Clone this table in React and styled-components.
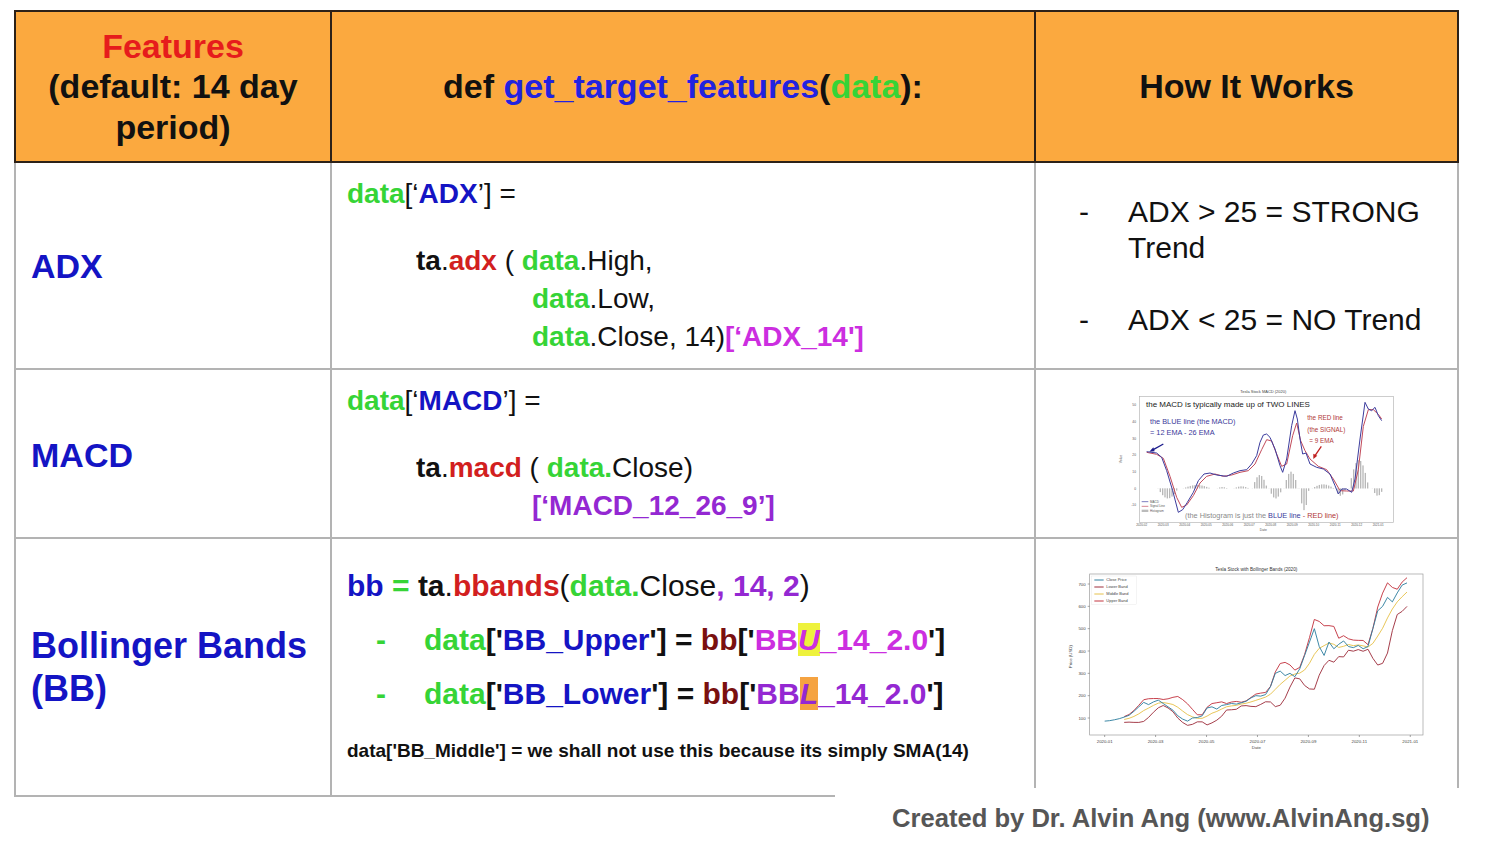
import React from "react";
import styled, { createGlobalStyle } from "styled-components";

const GREEN = "#36d436";
const BLUE = "#1414c4";
const RED = "#d21f1f";
const MAROON = "#7a1010";
const MAGENTA = "#cc2ee0";
const VIOLET = "#9428d2";
const HEAD_LINE = "#2c2118";
const GRID_LINE = "#b3b3b3";

const GlobalStyle = createGlobalStyle`
  body {
    margin: 0;
    background: #fff;
    color: #111;
    font-family: "Liberation Sans", Arial, sans-serif;
  }
`;

const Page = styled.div`
  padding: 10px 0 0 14px;
  width: 1445px;
`;

const Row = styled.div`
  display: grid;
  grid-template-columns: 316px 704px 425px;
  height: ${({ $h }) => $h}px;
  box-sizing: border-box;
  border-bottom: 2px solid ${({ $head }) => ($head ? HEAD_LINE : GRID_LINE)};
  ${({ $head }) => $head && `border-top: 2px solid ${HEAD_LINE}; background: #fba93f;`}
`;

const Cell = styled.div`
  box-sizing: border-box;
  min-width: 0;
  border-left: 2px solid ${({ $head }) => ($head ? HEAD_LINE : GRID_LINE)};
  ${({ $last, $head }) => $last && `border-right: 2px solid ${$head ? HEAD_LINE : GRID_LINE};`}
`;

const HeadCell = styled(Cell)`
  display: flex;
  align-items: center;
  justify-content: center;
  text-align: center;
  font-size: 34px;
  font-weight: bold;
  line-height: 40.5px;
  color: #111;
`;

const HeadWord = styled.span`
  color: ${({ $c }) => $c};
`;

const LabelCell = styled(Cell)`
  display: flex;
  align-items: center;
  padding-left: 15px;
  color: ${BLUE};
  font-weight: bold;
  font-size: ${({ $size }) => $size || 34}px;
  line-height: ${({ $size }) => ($size ? 43 : 40)}px;
`;

const CodeCell = styled(Cell)`
  display: flex;
  flex-direction: column;
  padding: ${({ $top }) => $top}px 0 0 15px;
  font-size: ${({ $size }) => $size}px;
  white-space: nowrap;
`;

const Line = styled.div`
  line-height: 38px;
  padding-left: ${({ $indent }) => $indent || 0}px;
  margin-top: ${({ $gap }) => $gap || 0}px;
`;

const SmallLine = styled.div`
  margin-top: 26px;
  font-size: 19px;
  line-height: 24px;
  font-weight: bold;
`;

const Data = styled.span`
  color: ${GREEN};
  font-weight: bold;
`;

const Key = styled.span`
  color: ${BLUE};
  font-weight: bold;
`;

const Fn = styled.span`
  color: ${RED};
  font-weight: bold;
`;

const Obj = styled.span`
  font-weight: bold;
  color: ${({ $c }) => $c || "#111"};
`;

const Str = styled.span`
  color: ${({ $c }) => $c};
  font-weight: ${({ $bold }) => ($bold ? "bold" : "normal")};
`;

const Mark = styled.span`
  font-style: italic;
  background: ${({ $bg }) => $bg};
`;

const Bullet = styled.span`
  display: inline-block;
  box-sizing: border-box;
  width: 77px;
  padding-left: 29px;
  color: ${GREEN};
  font-weight: bold;
`;

const NoteCell = styled(Cell)`
  display: flex;
  flex-direction: column;
  gap: 36px;
  padding: 31px 0 0 43px;
  font-size: 30px;
  line-height: 36px;
`;

const Note = styled.div`
  display: grid;
  grid-template-columns: 49px 310px;
`;

const ChartCell = styled(Cell)`
  display: flex;
  justify-content: center;
  align-items: ${({ $align }) => $align || "center"};
  padding: ${({ $pad }) => $pad};
`;

const Footer = styled.div`
  position: relative;
  margin: -9px 0 0 821px;
  width: 660px;
  height: 68px;
  box-sizing: border-box;
  padding: 15px 0 0 57px;
  background: #fff;
  color: #565656;
  font-size: 25.6px;
  font-weight: bold;
  line-height: 30px;
  white-space: nowrap;
`;

const pts = (arr) => arr.map(([x, y]) => `${x},${y}`).join(" ");

const MACD_BLUE = [
  [140, 218], [170, 222], [185, 235], [200, 275], [218, 335], [235, 400], [248, 392], [262, 370],
  [280, 340], [295, 305], [312, 285], [330, 282], [350, 288], [380, 292], [400, 282], [420, 275],
  [440, 272], [455, 255], [470, 230], [480, 190], [490, 168], [500, 165], [510, 175], [525, 210],
  [540, 260], [548, 280], [560, 240], [575, 140], [585, 95], [592, 120], [600, 180], [608, 225],
  [618, 222], [630, 255], [650, 265], [670, 270], [690, 285], [705, 320], [715, 345], [725, 330],
  [740, 330], [755, 340], [765, 300], [780, 180], [795, 70], [805, 90], [815, 95], [825, 85],
  [835, 110], [845, 125],
];

const MACD_RED = [
  [140, 220], [170, 226], [190, 238], [210, 292], [230, 355], [245, 385], [260, 378], [280, 350],
  [300, 312], [320, 292], [345, 285], [370, 292], [395, 288], [420, 280], [445, 275], [465, 255],
  [485, 212], [500, 182], [515, 186], [530, 225], [545, 262], [560, 255], [578, 170], [590, 132],
  [602, 185], [615, 215], [630, 240], [655, 262], [680, 272], [700, 300], [720, 335], [740, 336],
  [760, 336], [775, 272], [790, 142], [805, 92], [820, 92], [835, 106], [845, 120],
];

const HIST = [
  [172, 232, -30], [248, 330, 10], [350, 380, 4], [400, 445, 6], [455, 500, 40], [505, 545, -30],
  [550, 592, 50], [596, 625, -65], [635, 700, 12], [705, 735, -22], [745, 805, 85], [815, 848, -22],
];

function MacdChart() {
  const bars = [];
  HIST.forEach(([x0, x1, h]) => {
    for (let x = x0; x <= x1; x += 7) {
      const hh = h * Math.sin((Math.PI * (x - x0)) / (x1 - x0 || 1));
      bars.push(
        <rect key={`${x0}-${x}`} x={x} y={hh > 0 ? 328 - hh : 328} width="4" height={Math.abs(hh) + 0.5} fill="#b8b8b8" />
      );
    }
  });
  const yTicks = [50, 40, 30, 20, 10, 0, -10];
  const xTicks = ["2020-02", "2020-03", "2020-04", "2020-05", "2020-06", "2020-07", "2020-08", "2020-09", "2020-10", "2020-11", "2020-12", "2021-01"];
  return (
    <svg width="320" height="160" viewBox="0 0 960 480">
      <text x="490" y="42" fontSize="12" textAnchor="middle" fill="#444">Tesla Stock MACD (2020)</text>
      <rect x="118" y="52" width="762" height="378" fill="#fff" stroke="#b5b5b5" strokeWidth="2" />
      {yTicks.map((v, i) => (
        <text key={v} x="108" y={82 + i * 50} fontSize="10" textAnchor="end" fill="#555">{v}</text>
      ))}
      <text x="66" y="240" fontSize="10" fill="#555" transform="rotate(-90 66 240)" textAnchor="middle">Value</text>
      {xTicks.map((t, i) => (
        <text key={t} x={125 + i * 64.5} y="440" fontSize="9" textAnchor="middle" fill="#555">{t}</text>
      ))}
      <text x="490" y="455" fontSize="10" textAnchor="middle" fill="#555">Date</text>
      {bars}
      <polyline points={pts(MACD_RED)} fill="none" stroke="#c24a5a" strokeWidth="3" />
      <polyline points={pts(MACD_BLUE)} fill="none" stroke="#3d3d9e" strokeWidth="3" />
      <g fontSize="9" fill="#555">
        <line x1="125" y1="368" x2="145" y2="368" stroke="#3d3d9e" strokeWidth="2" />
        <text x="150" y="371">MACD</text>
        <line x1="125" y1="382" x2="145" y2="382" stroke="#c24a5a" strokeWidth="2" />
        <text x="150" y="385">Signal Line</text>
        <rect x="125" y="392" width="20" height="7" fill="#bbb" />
        <text x="150" y="399">Histogram</text>
      </g>
      <text x="138" y="85" fontSize="24" fill="#222">the MACD is typically made up of TWO LINES</text>
      <text x="150" y="135" fontSize="22" fill="#3a3a9a">the BLUE line (the MACD)</text>
      <text x="150" y="168" fontSize="22" fill="#3a3a9a">= 12 EMA - 26 EMA</text>
      <text x="622" y="123" fontSize="19" fill="#b03838">the RED line</text>
      <text x="622" y="158" fontSize="19" fill="#b03838">(the SIGNAL)</text>
      <text x="628" y="192" fontSize="19" fill="#b03838">= 9 EMA</text>
      <line x1="190" y1="195" x2="156" y2="214" stroke="#1c1c8c" strokeWidth="4" />
      <polygon points="148,218 160,205 164,217" fill="#1c1c8c" />
      <line x1="664" y1="202" x2="645" y2="230" stroke="#c02020" strokeWidth="4" />
      <polygon points="640,240 640,224 652,230" fill="#c02020" />
      <text x="255" y="418" fontSize="22" fill="#8a8a8a">
        (the Histogram is just the <tspan fill="#3a3a9a">BLUE line</tspan>
        <tspan fill="#b03838"> - RED line)</tspan>
      </text>
    </svg>
  );
}

const PRICE = [
  86, 88, 92, 97, 104, 112, 130, 150, 170, 160, 172, 180, 165, 150, 135, 110, 95, 86, 100, 102,
  110, 145, 150, 140, 156, 160, 165, 162, 168, 175, 190, 200, 198, 205, 240, 300, 310, 290, 300,
  285, 320, 380, 440, 500, 420, 380, 440, 410, 430, 445, 420, 415, 425, 410, 420, 500, 580, 600,
  640, 620, 660, 695, 705,
];

function BollingerChart() {
  const n = PRICE.length;
  const X = (i) => 143 + (i * (1050 - 143)) / (n - 1);
  const Y = (v) => 474 - (v - 100) * 0.67;
  const win = 5;
  const mid = [];
  const up = [];
  const low = [];
  for (let i = win - 1; i < n; i++) {
    const slice = PRICE.slice(i - win + 1, i + 1);
    const m = slice.reduce((a, b) => a + b, 0) / win;
    const sd = Math.sqrt(slice.reduce((a, b) => a + (b - m) ** 2, 0) / win);
    mid.push([X(i), Y(m)]);
    up.push([X(i), Y(m + 2 * sd)]);
    low.push([X(i), Y(m - 2 * sd)]);
  }
  const close = PRICE.map((v, i) => [X(i), Y(v)]);
  const yTicks = [700, 600, 500, 400, 300, 200, 100];
  const xTicks = ["2020-01", "2020-03", "2020-05", "2020-07", "2020-09", "2020-11", "2021-01"];
  return (
    <svg width="380" height="200" viewBox="0 0 1140 600">
      <text x="598" y="34" fontSize="14" textAnchor="middle" fill="#333">Tesla Stock with Bollinger Bands (2020)</text>
      <rect x="98" y="42" width="1000" height="483" fill="#fff" stroke="#999" strokeWidth="2" />
      {yTicks.map((v) => (
        <g key={v}>
          <line x1="92" y1={Y(v)} x2="98" y2={Y(v)} stroke="#777" strokeWidth="2" />
          <text x="86" y={Y(v) + 5} fontSize="13" textAnchor="end" fill="#444">{v}</text>
        </g>
      ))}
      <text x="46" y="290" fontSize="13" fill="#444" transform="rotate(-90 46 290)" textAnchor="middle">Price (USD)</text>
      {xTicks.map((t, i) => (
        <g key={t}>
          <line x1={143 + i * 152.8} y1="525" x2={143 + i * 152.8} y2="531" stroke="#777" strokeWidth="2" />
          <text x={143 + i * 152.8} y="548" fontSize="13" textAnchor="middle" fill="#444">{t}</text>
        </g>
      ))}
      <text x="598" y="566" fontSize="13" textAnchor="middle" fill="#444">Date</text>
      <polyline points={pts(low)} fill="none" stroke="#9e2f3d" strokeWidth="2.8" />
      <polyline points={pts(up)} fill="none" stroke="#c3343f" strokeWidth="2.8" />
      <polyline points={pts(mid)} fill="none" stroke="#e6c24c" strokeWidth="2.8" />
      <polyline points={pts(close)} fill="none" stroke="#2f7f9f" strokeWidth="2.8" />
      <g fontSize="12" fill="#444">
        <rect x="104" y="48" width="134" height="86" fill="#fff" stroke="#ddd" />
        <line x1="112" y1="60" x2="140" y2="60" stroke="#2f7f9f" strokeWidth="3" />
        <text x="148" y="64">Close Price</text>
        <line x1="112" y1="81" x2="140" y2="81" stroke="#9e2f3d" strokeWidth="3" />
        <text x="148" y="85">Lower Band</text>
        <line x1="112" y1="102" x2="140" y2="102" stroke="#e6c24c" strokeWidth="3" />
        <text x="148" y="106">Middle Band</text>
        <line x1="112" y1="123" x2="140" y2="123" stroke="#c3343f" strokeWidth="3" />
        <text x="148" y="127">Upper Band</text>
      </g>
    </svg>
  );
}

export default function App() {
  return (
    <>
      <GlobalStyle />
      <Page>
        <Row $head $h={153}>
          <HeadCell $head>
            <div>
              <HeadWord $c="#e61c1c">Features</HeadWord>
              <br />
              (default: 14 day
              <br />
              period)
            </div>
          </HeadCell>
          <HeadCell $head>
            <div>
              def <HeadWord $c="#2222e0">get_target_features</HeadWord>(<HeadWord $c={GREEN}>data</HeadWord>):
            </div>
          </HeadCell>
          <HeadCell $head $last>
            How It Works
          </HeadCell>
        </Row>

        <Row $h={207}>
          <LabelCell>ADX</LabelCell>
          <CodeCell $top={12} $size={28}>
            <Line>
              <Data>data</Data>[‘<Key>ADX</Key>’] =
            </Line>
            <Line $indent={69} $gap={29}>
              <Obj>ta</Obj>.<Fn>adx</Fn> ( <Data>data</Data>.High,
            </Line>
            <Line $indent={185}>
              <Data>data</Data>.Low,
            </Line>
            <Line $indent={185}>
              <Data>data</Data>.Close, 14)<Str $bold $c={MAGENTA}>[‘ADX_14']</Str>
            </Line>
          </CodeCell>
          <NoteCell $last>
            <Note>
              <span>-</span>
              <span>ADX &gt; 25 = STRONG Trend</span>
            </Note>
            <Note>
              <span>-</span>
              <span>ADX &lt; 25 = NO Trend</span>
            </Note>
          </NoteCell>
        </Row>

        <Row $h={169}>
          <LabelCell>MACD</LabelCell>
          <CodeCell $top={12} $size={28}>
            <Line>
              <Data>data</Data>[‘<Key>MACD</Key>’] =
            </Line>
            <Line $indent={69} $gap={29}>
              <Obj>ta</Obj>.<Fn>macd</Fn> ( <Data>data.</Data>Close)
            </Line>
            <Line $indent={185}>
              <Str $bold $c={VIOLET}>[‘MACD_12_26_9’]</Str>
            </Line>
          </CodeCell>
          <ChartCell $last $pad="9px 0 0 26px">
            <MacdChart />
          </ChartCell>
        </Row>

        <Row $h={258}>
          <LabelCell $size={36}>
            <div>
              Bollinger Bands
              <br />
              (BB)
            </div>
          </LabelCell>
          <CodeCell $top={28} $size={30}>
            <Line>
              <Key>bb</Key> <Data>=</Data> <Obj>ta</Obj>.<Fn>bbands</Fn>(<Data>data.</Data>Close
              <Str $bold $c={VIOLET}>, 14, 2</Str>)
            </Line>
            <Line $gap={16}>
              <Bullet>-</Bullet>
              <Data>data</Data>
              <Obj>['</Obj>
              <Str $bold $c={BLUE}>BB_Upper</Str>
              <Obj>'] = </Obj>
              <Obj $c={MAROON}>bb</Obj>
              <Obj>['</Obj>
              <Str $bold $c={MAGENTA}>
                BB<Mark $bg="#eef23c">U</Mark>_14_2.0
              </Str>
              <Obj>']</Obj>
            </Line>
            <Line $gap={16}>
              <Bullet>-</Bullet>
              <Data>data</Data>
              <Obj>['</Obj>
              <Str $bold $c={BLUE}>BB_Lower</Str>
              <Obj>'] = </Obj>
              <Obj $c={MAROON}>bb</Obj>
              <Obj>['</Obj>
              <Str $bold $c={VIOLET}>
                BB<Mark $bg="#f5a341">L</Mark>_14_2.0
              </Str>
              <Obj>']</Obj>
            </Line>
            <SmallLine>data['BB_Middle'] = we shall not use this because its simply SMA(14)</SmallLine>
          </CodeCell>
          <ChartCell $last $align="flex-start" $pad="21px 0 0 0">
            <BollingerChart />
          </ChartCell>
        </Row>

        <Footer>Created by Dr. Alvin Ang (www.AlvinAng.sg)</Footer>
      </Page>
    </>
  );
}
